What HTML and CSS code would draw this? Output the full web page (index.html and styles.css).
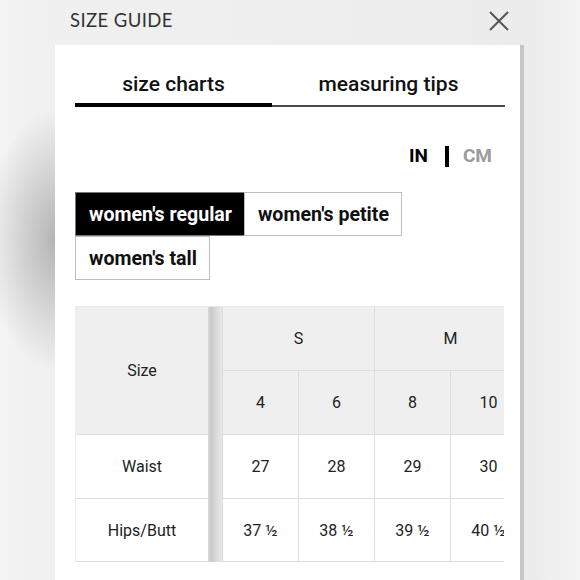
FILE: index.html
```html
<!DOCTYPE html>
<html lang="en">
<head>
<meta charset="utf-8">
<title>Size Guide</title>
<link rel="stylesheet" href="styles.css">
</head>
<body>
<div class="modal">
  <header class="modal-head">
    <h1 class="modal-title">SIZE GUIDE</h1>
    <button class="close" aria-label="Close">
      <svg width="20" height="20" viewBox="0 0 20 20"><path d="M1 1L19 19M19 1L1 19" stroke="#555" stroke-width="2" fill="none"/></svg>
    </button>
  </header>
  <section class="panel">
    <nav class="tabs">
      <div class="tab tab-active">size charts</div>
      <div class="tab">measuring tips</div>
    </nav>
    <div class="units">
      <span class="unit unit-on">IN</span>
      <span class="unit-bar"></span>
      <span class="unit unit-off">CM</span>
    </div>
    <div class="fits">
      <div class="fit fit-on">women's regular</div>
      <div class="fit">women's petite</div>
      <div class="fit">women's tall</div>
    </div>
    <div class="chart-wrap">
      <div class="chart">
        <div class="c head c-size">Size</div>
        <div class="c-strip"></div>
        <div class="c head c-s">S</div>
        <div class="c head c-m">M</div>
        <div class="c head">4</div>
        <div class="c head">6</div>
        <div class="c head">8</div>
        <div class="c head">10</div>
        <div class="c c-label">Waist</div>
        <div class="c">27</div>
        <div class="c">28</div>
        <div class="c">29</div>
        <div class="c">30</div>
        <div class="c c-label">Hips/Butt</div>
        <div class="c">37 ½</div>
        <div class="c">38 ½</div>
        <div class="c">39 ½</div>
        <div class="c">40 ½</div>
      </div>
    </div>
  </section>
</div>
</body>
</html>
```
FILE: styles.css
```css
* { box-sizing: border-box; }
html, body { margin: 0; padding: 0; }
body {
  width: 580px;
  height: 580px;
  overflow: hidden;
  background:
    radial-gradient(ellipse 70px 130px at 56px 240px, rgba(160,160,160,0.75), rgba(239,239,239,0) 100%),
    linear-gradient(to right, #f3f3f3 0, #f0f0f0 55px, #ececec 530px, #f3f3f3 580px);
  font-family: Roboto, "Liberation Sans", sans-serif;
  color: #222;
}
.modal {
  margin-left: 55px;
  width: 469px;
}
.modal-head {
  height: 45px;
  display: flex;
  justify-content: space-between;
  align-items: flex-start;
  padding: 9px 15px 0 15px;
}
.modal-title {
  margin: 0;
  font-family: Lato, "Open Sans", sans-serif;
  font-weight: 400;
  font-size: 18.5px;
  line-height: 22px;
  letter-spacing: 0.4px;
  color: #333;
}
.close {
  margin: 2px 0 0 0;
  padding: 0;
  border: 0;
  background: none;
  width: 20px;
  height: 20px;
  display: block;
}
.close svg { display: block; }
.panel {
  background: #fff;
  border-right: 4px solid #c6c6c6;
  height: 535px;
  padding: 27px 15px 0 20px;
}
.tabs {
  display: flex;
  align-items: flex-start;
  border-bottom: 2px solid #4a4a4a;
}
.tab {
  font-size: 21px;
  font-weight: 500;
  line-height: 24px;
  text-align: center;
  color: #111;
  flex: 1 1 auto;
}
.tab-active {
  flex: 0 0 197px;
  padding-bottom: 7px;
  border-bottom: 4px solid #000;
  margin-bottom: -2px;
}
.units {
  margin-top: 37px;
  display: flex;
  justify-content: flex-end;
  align-items: center;
  padding-right: 13px;
  height: 24px;
}
.unit {
  font-size: 19px;
  font-weight: 700;
  line-height: 24px;
}
.unit-on { color: #000; }
.unit-off { color: #9b9b9b; }
.unit-bar {
  width: 4px;
  height: 21px;
  background: #000;
  margin: 1px 14px 0 17px;
}
.fits {
  margin-top: 24px;
  display: flex;
  flex-wrap: wrap;
  width: 430px;
}
.fit {
  height: 44px;
  display: flex;
  align-items: center;
  padding: 0 12px 0 13px;
  border: 1px solid #bdbdbd;
  font-size: 19.6px;
  font-weight: 700;
  color: #111;
  margin-right: -1px;
}
.fit-on {
  background: #000;
  color: #fff;
  border-color: #777;
}
.chart-wrap {
  margin-top: 26px;
  width: 429px;
  overflow: hidden;
  border-top: 1px solid #e8e8e8;
  border-left: 1px solid #ececec;
}
.chart {
  display: grid;
  grid-template-columns: 132px 15px 76px 76px 76px 76px;
  grid-template-rows: 64px 64px 64px 63px;
  width: 451px;
}
.c {
  display: flex;
  align-items: center;
  justify-content: center;
  font-size: 16px;
  color: #222;
  border-right: 1px solid #dedede;
  border-bottom: 1px solid #dedede;
  background: #fff;
}
.head { background: #efefef; }
.c-size { grid-row: 1 / 3; grid-column: 1; border-right: 0; }
.c-label { grid-column: 1; border-right: 0; }
.c-strip {
  grid-row: 1 / 5;
  grid-column: 2;
  background: linear-gradient(to right, #dadada 0, #c9c9c9 3px, #dcdcdc 9px, #e9e9e9 15px);
  border-right: 1px solid #dcdcdc;
}
.c-s { grid-column: 3 / 5; }
.c-m { grid-column: 5 / 7; }
```
